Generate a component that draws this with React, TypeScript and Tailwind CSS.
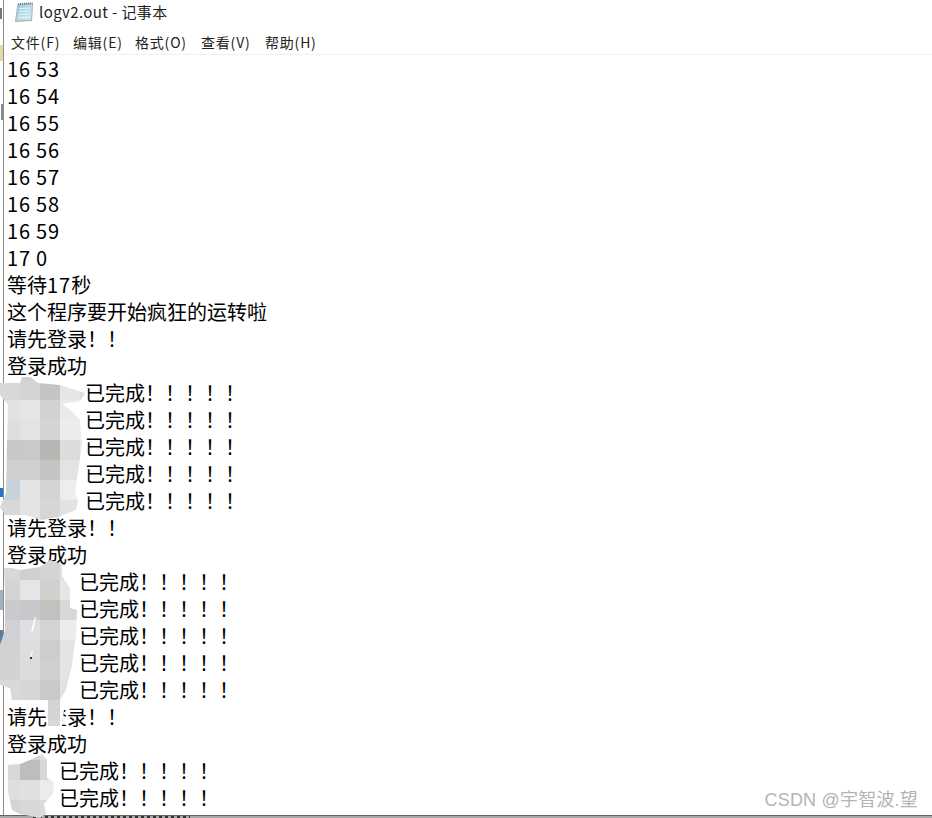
import type { ReactNode } from 'react';

const numbers = ['16 53', '16 54', '16 55', '16 56', '16 57', '16 58', '16 59', '17 0'];
const menus = [
  { label: '文件(F)', width: 'w-[62px]' },
  { label: '编辑(E)', width: 'w-[62px]' },
  { label: '格式(O)', width: 'w-[66px]' },
  { label: '查看(V)', width: 'w-[64px]' },
  { label: '帮助(H)', width: 'w-[60px]' },
];

function NotepadIcon() {
  return (
    <svg width="21" height="21" viewBox="0 0 21 21" className="shrink-0">
      <defs>
        <linearGradient id="pad" x1="0" y1="0" x2="1" y2="1">
          <stop offset="0" stopColor="#8ccbe4" />
          <stop offset="1" stopColor="#d6edf5" />
        </linearGradient>
      </defs>
      <path d="M4.5 2 L20 1 L19 19 L2 20 Z" fill="#c8b48a" />
      <path d="M5 2.5 L19.5 1.5 L18.4 18 L2.8 19 Z" fill="url(#pad)" stroke="#9fb4bf" strokeWidth="0.6" />
      <path d="M5 2.2 L19.5 1.2" stroke="#6f7f88" strokeWidth="2" strokeDasharray="1 1" />
      <path d="M6.5 6.5 L17 6 M6 9.5 L17 9 M5.8 12.5 L16.6 12 M5.5 15.5 L16.4 15" stroke="#e6f5fa" strokeWidth="1" />
    </svg>
  );
}

function DoneRows({ indent, count }: { indent: string; count: number }) {
  return (
    <>
      {Array.from({ length: count }).map((_, i) => (
        <div key={i} className={`h-[27px] ${indent}`}>已完成！！！！！</div>
      ))}
    </>
  );
}

// pixelated smear over the redacted names
function Mosaic({ className, columns, rows, cells, clip, children }: { className: string; columns: number[]; rows: number[]; cells: string[][]; clip: string; children?: ReactNode }) {
  const id = 'c' + clip.length;
  const w = columns.reduce((a, b) => a + b, 0);
  const h = rows.reduce((a, b) => a + b, 0);
  return (
    <svg className={`absolute ${className}`} width={w} height={h} viewBox={`0 0 ${w} ${h}`}>
      <clipPath id={id}><path d={clip} /></clipPath>
      <g clipPath={`url(#${id})`}>
        {rows.map((rh, r) =>
          columns.map((cw, c) => (
            <rect
              key={`${r}-${c}`}
              x={columns.slice(0, c).reduce((a, b) => a + b, 0)}
              y={rows.slice(0, r).reduce((a, b) => a + b, 0)}
              width={cw}
              height={rh}
              fill={cells[r][c]}
            />
          ))
        )}
      </g>
      {children}
    </svg>
  );
}

export default function App() {
  return (
    <div className="relative flex h-[818px] w-[932px] flex-col overflow-hidden bg-white text-black" style={{ fontFamily: '"Noto Sans CJK SC", sans-serif' }}>
      <div className="ml-[3px] flex h-[815px] flex-col border-l border-l-[#8c8c8c]">
        <div className="flex h-[24px] items-center gap-[5px] pl-[9px] text-[15px] tracking-[0.4px] text-[#222]">
          <NotepadIcon />
          <span>logv2.out - 记事本</span>
        </div>
        <div className="flex h-[31px] items-center border-b border-[#f0f0f0] pl-[7px] pt-[7px] text-[14px] tracking-[0.8px] text-[#222]">
          {menus.map((m) => (
            <span key={m.label} className={m.width}>{m.label}</span>
          ))}
        </div>
        <div className="pl-[3px] text-[20px] leading-[27px]">
          {numbers.map((n) => (
            <div key={n} className="h-[27px] tracking-[0.8px]">{n}</div>
          ))}
          <div className="h-[27px]">等待<span className="tracking-[1px]">17</span>秒</div>
          <div className="h-[27px]">这个程序要开始疯狂的运转啦</div>
          <div className="h-[27px]">请先登录！！</div>
          <div className="h-[27px]">登录成功</div>
          <DoneRows indent="pl-[78px]" count={5} />
          <div className="h-[27px]">请先登录！！</div>
          <div className="h-[27px]">登录成功</div>
          <DoneRows indent="pl-[72px]" count={5} />
          <div className="h-[27px]">请先登录！！</div>
          <div className="h-[27px]">登录成功</div>
          <DoneRows indent="pl-[52px]" count={2} />
        </div>
      </div>

      {/* bottom edge of the window, with scraps of what is behind it */}
      <div className="h-[3px] border-t border-t-[#666666] bg-[#a8a8a8] pl-[33px]">
        <div className="h-[2px] w-[157px] bg-[repeating-linear-gradient(90deg,#333333_0px,#333333_3px,transparent_3px,transparent_6px)]" />
      </div>

      {/* scraps of the windows behind, along the left edge */}
      <svg className="absolute left-0 top-0" width="3" height="818" viewBox="0 0 3 818">
        <rect x="0" y="8" width="2" height="11" fill="#777777" />
        <rect x="0" y="45" width="3" height="16" fill="#e6d9a8" />
        <rect x="1" y="104" width="2" height="16" fill="#8a8a8a" />
        <rect x="0" y="488" width="3" height="9" fill="#1a78d0" />
        <rect x="0" y="590" width="3" height="20" fill="#9db4c8" />
        <rect x="0" y="630" width="3" height="14" fill="#5f7f96" />
      </svg>

      <Mosaic
        className="left-0 top-[375px]"
        columns={[20, 20, 20, 20, 7]}
        rows={[5, 20, 20, 20, 20, 20, 20, 20]}
        cells={[
          ['#e6e6e6', '#cfd0d2', '#d8d8d8', '#eeeeee', '#ffffff'],
          ['#d8d8d8', '#d3d4d6', '#c4c4c2', '#e4e6e7', '#dddddd'],
          ['#e2e2e2', '#e4e5e6', '#d2d2d2', '#e9eaeb', '#eeefef'],
          ['#dedede', '#e2e3e4', '#d4d4d4', '#ebecec', '#eeefef'],
          ['#c9c8c6', '#c9c9c7', '#b6b6b3', '#dcdcdc', '#e8e9e9'],
          ['#d0d0d0', '#cfd0d2', '#c4c4c4', '#e2e3e4', '#e8e8e8'],
          ['#c8d2da', '#e4e4e4', '#d4d4d4', '#eceded', '#eeeeee'],
          ['#d8d8d8', '#e4e4e4', '#d6d6d6', '#e2e2e2', '#ffffff'],
        ]}
        clip="M0 8 L20 8 L22 2 L30 2 L38 8 L60 10 L85 18 L80 26 L62 29 L72 36 L80 45 L82 70 L75 118 L78 125 L76 135 L58 142 L42 145 L25 140 L5 140 L0 132 L6 118 L7 70 L8 30 L0 20 Z"
      />
      <Mosaic
        className="left-0 top-[560px]"
        columns={[20, 20, 20, 20]}
        rows={[20, 20, 20, 20, 20, 20, 20, 20, 20]}
        cells={[
          ['#d8d8d8', '#cfd0d2', '#d4d4d4', '#e2e2e2'],
          ['#d4d4d4', '#e4e5e7', '#d0d0ce', '#e6e6e6'],
          ['#c8cacc', '#c6c8ca', '#c2c1be', '#d8d8d8'],
          ['#cfd1d4', '#dfe0e2', '#d2d3d4', '#ebecec'],
          ['#d2d2d0', '#dddddd', '#cdcdcb', '#e4e4e4'],
          ['#d2d2d0', '#dcdcdc', '#d0d0ce', '#e4e4e6'],
          ['#d8d8d8', '#d6d6d8', '#c9c9c7', '#e2e2e2'],
          ['#ffffff', '#ffffff', '#d4d4d4', '#ffffff'],
          ['#ffffff', '#ffffff', '#d8d8d8', '#ffffff'],
        ]}
        clip="M4 8 L12 8 L20 10 L40 7 L50 0 L62 4 L62 16 L70 28 L70 48 L77 50 L76 75 L72 105 L66 130 L60 140 L65 142 L62 166 L48 166 L48 140 L40 140 L12 140 L10 128 L0 125 L0 85 L5 70 L5 30 Z"
      >
        <path d="M35 57 L31 71 L33 71 L36 57 Z" fill="#ffffff" />
        <path d="M32 90 L30 97 L31 97 L33 90 Z" fill="#ffffff" />
        <rect x="30" y="97" width="2" height="2" fill="#5a2020" />
      </Mosaic>
      <Mosaic
        className="left-[6px] top-[752px]"
        columns={[14, 20, 20]}
        rows={[8, 20, 20, 20, 8]}
        cells={[
          ['#ffffff', '#d4d4d4', '#dddddd'],
          ['#d8d8d8', '#bdbdbd', '#d8d8d8'],
          ['#dedede', '#e0e0e0', '#ebebeb'],
          ['#d4d4d4', '#d8d8d8', '#dcdcdc'],
          ['#ffffff', '#d8d8d8', '#ffffff'],
        ]}
        clip="M2 13 L14 12 L24 8 L36 2 L41 8 L41 26 L48 30 L47 42 L38 52 L40 62 L34 66 L14 62 L6 58 L2 40 Z"
      />

      <div className="absolute bottom-[5px] right-[14px] text-[18px] leading-[26px] tracking-[0.2px] text-[#b4b4b4]" style={{ fontFamily: '"Liberation Sans", "Noto Sans CJK SC", sans-serif' }}>
        CSDN @宇智波.望
      </div>
    </div>
  );
}
